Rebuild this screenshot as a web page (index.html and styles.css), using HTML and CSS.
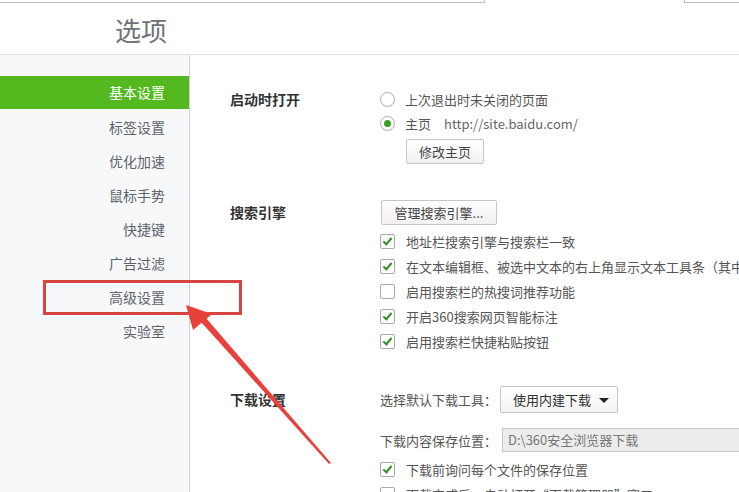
FILE: index.html
```html
<!DOCTYPE html>
<html>
<head>
    <meta charset="utf-8">
    <link rel="stylesheet" href="styles.css">
</head>
<body>
    <div class="tabstrip">
        <div class="tab tab-left"></div>
        <div class="tab-gap"></div>
        <div class="tab tab-right"></div>
    </div>

    <div class="header">
        <h1>选项</h1>
    </div>

    <div class="main">
        <ul class="sidebar">
            <li class="active">基本设置</li>
            <li>标签设置</li>
            <li>优化加速</li>
            <li>鼠标手势</li>
            <li>快捷键</li>
            <li>广告过滤</li>
            <li>高级设置</li>
            <li>实验室</li>
        </ul>

        <div class="content">
            <div class="section section-startup">
                <div class="section-title">启动时打开</div>
                <div class="section-body">
                    <div class="row"><span class="radio"></span>上次退出时未关闭的页面</div>
                    <div class="row"><span class="radio checked"></span>主页<span class="url">http://site.baidu.com/</span></div>
                    <button class="btn btn-home">修改主页</button>
                </div>
            </div>

            <div class="section section-search">
                <div class="section-title">搜索引擎</div>
                <div class="section-body">
                    <button class="btn btn-engine">管理搜索引擎...</button>
                    <div class="row check-row"><span class="check on"></span>地址栏搜索引擎与搜索栏一致</div>
                    <div class="row check-row"><span class="check on"></span>在文本编辑框、被选中文本的右上角显示文本工具条（其中包含复制、搜索等功能）</div>
                    <div class="row check-row"><span class="check"></span>启用搜索栏的热搜词推荐功能</div>
                    <div class="row check-row"><span class="check on"></span>开启360搜索网页智能标注</div>
                    <div class="row check-row"><span class="check on"></span>启用搜索栏快捷粘贴按钮</div>
                </div>
            </div>

            <div class="section section-download">
                <div class="section-title">下载设置</div>
                <div class="section-body">
                    <div class="field">
                        <span class="field-label">选择默认下载工具：</span>
                        <div class="select">使用内建下载<span class="caret"></span></div>
                    </div>
                    <div class="field field-path">
                        <span class="field-label">下载内容保存位置：</span>
                        <div class="path-input">D:\360安全浏览器下载</div>
                    </div>
                    <div class="row check-row first-check"><span class="check on"></span>下载前询问每个文件的保存位置</div>
                    <div class="row check-row"><span class="check"></span>下载完成后，自动打开“下载管理器”窗口</div>
                </div>
            </div>
        </div>
    </div>

    <div class="highlight"></div>
    <svg class="arrow" width="739" height="492" viewBox="0 0 739 492">
        <polygon points="331,463 206,318 201,322 329,464" fill="#e8403a"/>
        <polygon points="186,305 212,314 193,330" fill="#e8403a"/>
    </svg>
</body>
</html>
```

FILE: styles.css
```css
body {
    margin: 0;
    width: 739px;
    height: 492px;
    overflow: hidden;
    position: relative;
    font-family: "Noto Sans CJK SC", "Open Sans", sans-serif;
    color: #555;
    background: #fff;
}
.tabstrip {
    display: flex;
    height: 3px;
}
.tab {
    border-bottom: 1px solid #bdbdbd;
    height: 2px;
}
.tab-left {
    width: 484px;
    border-right: 1px solid #bdbdbd;
}
.tab-gap {
    flex: 1;
}
.tab-right {
    width: 54px;
    border-left: 1px solid #bdbdbd;
}
.header {
    height: 52px;
    border-bottom: 1px solid #e3e3e3;
    box-sizing: border-box;
    padding-left: 115px;
}
h1 {
    margin: 0;
    padding-top: 9px;
    font-size: 26px;
    font-weight: normal;
    line-height: 36px;
    color: #6d7278;
}
.main {
    display: flex;
    height: 437px;
}
.sidebar {
    list-style: none;
    margin: 0;
    padding: 21px 0 0 0;
    width: 189px;
    flex: none;
    background: #f7f8fa;
    border-right: 1px solid #d2d2d2;
}
.sidebar li {
    height: 34px;
    line-height: 34px;
    text-align: right;
    padding-right: 24px;
    font-size: 14px;
    color: #5f646a;
}
.sidebar li.active {
    background: #53b91f;
    color: #fff;
    height: 33px;
    line-height: 33px;
    margin-bottom: 1px;
}
.content {
    flex: 1;
    padding: 32px 0 0 40px;
    white-space: nowrap;
    overflow: hidden;
}
.section {
    display: flex;
}
.section-title {
    width: 150px;
    flex: none;
    font-size: 14px;
    font-weight: bold;
    color: #333;
    line-height: 24px;
}
.section-body {
    font-size: 13px;
}
.row {
    display: flex;
    align-items: center;
    height: 24px;
}
.radio {
    width: 13px;
    height: 13px;
    border: 1px solid #a9a9a9;
    border-radius: 50%;
    margin-right: 10px;
    position: relative;
    background: #fff;
}
.radio.checked::after {
    content: "";
    position: absolute;
    left: 3px;
    top: 3px;
    width: 7px;
    height: 7px;
    border-radius: 50%;
    background: #36a21d;
}
.url {
    margin-left: 13px;
    color: #666;
}
.btn {
    display: block;
    font-family: inherit;
    font-size: 13px;
    color: #444;
    background: linear-gradient(#fff, #f1f1f1);
    border: 1px solid #c6c6c6;
    border-radius: 2px;
    height: 25px;
    padding: 0;
}
.btn-home {
    margin: 4px 0 0 26px;
    width: 78px;
}
.section-search {
    margin-top: 36px;
}
.section-search .section-title {
    line-height: 25px;
}
.btn-engine {
    width: 116px;
    margin: 0 0 4px 1px;
}
.check-row {
    height: 25px;
}
.check {
    width: 13px;
    height: 13px;
    border: 1px solid #a9a9a9;
    border-radius: 2px;
    margin-right: 11px;
    position: relative;
    background: #fff;
}
.check.on::after {
    content: "";
    position: absolute;
    left: 4px;
    top: 1px;
    width: 3px;
    height: 7px;
    border: solid #2f8f22;
    border-width: 0 2px 2px 0;
    transform: rotate(40deg);
}
.section-download {
    margin-top: 32px;
}
.section-download .section-title {
    line-height: 27px;
}
.field {
    display: flex;
    align-items: center;
}
.field-label {
    width: 120px;
    flex: none;
    color: #555;
}
.select {
    width: 104px;
    height: 25px;
    line-height: 25px;
    padding-left: 12px;
    border: 1px solid #c6c6c6;
    border-radius: 2px;
    background: linear-gradient(#fff, #f3f3f3);
    color: #333;
    position: relative;
}
.caret {
    position: absolute;
    right: 8px;
    top: 11px;
    border-left: 5px solid transparent;
    border-right: 5px solid transparent;
    border-top: 5px solid #222;
}
.field-path {
    margin-top: 15px;
}
.path-input {
    width: 240px;
    height: 22px;
    line-height: 22px;
    padding-left: 5px;
    margin-left: 2px;
    border: 1px solid #c9c9c9;
    background: #ececec;
    color: #777;
}
.first-check {
    margin-top: 5px;
}
.highlight {
    position: absolute;
    left: 43px;
    top: 280px;
    width: 193px;
    height: 29px;
    border: 3px solid #d8443f;
}
.arrow {
    position: absolute;
    left: 0;
    top: 0;
    pointer-events: none;
}
```
